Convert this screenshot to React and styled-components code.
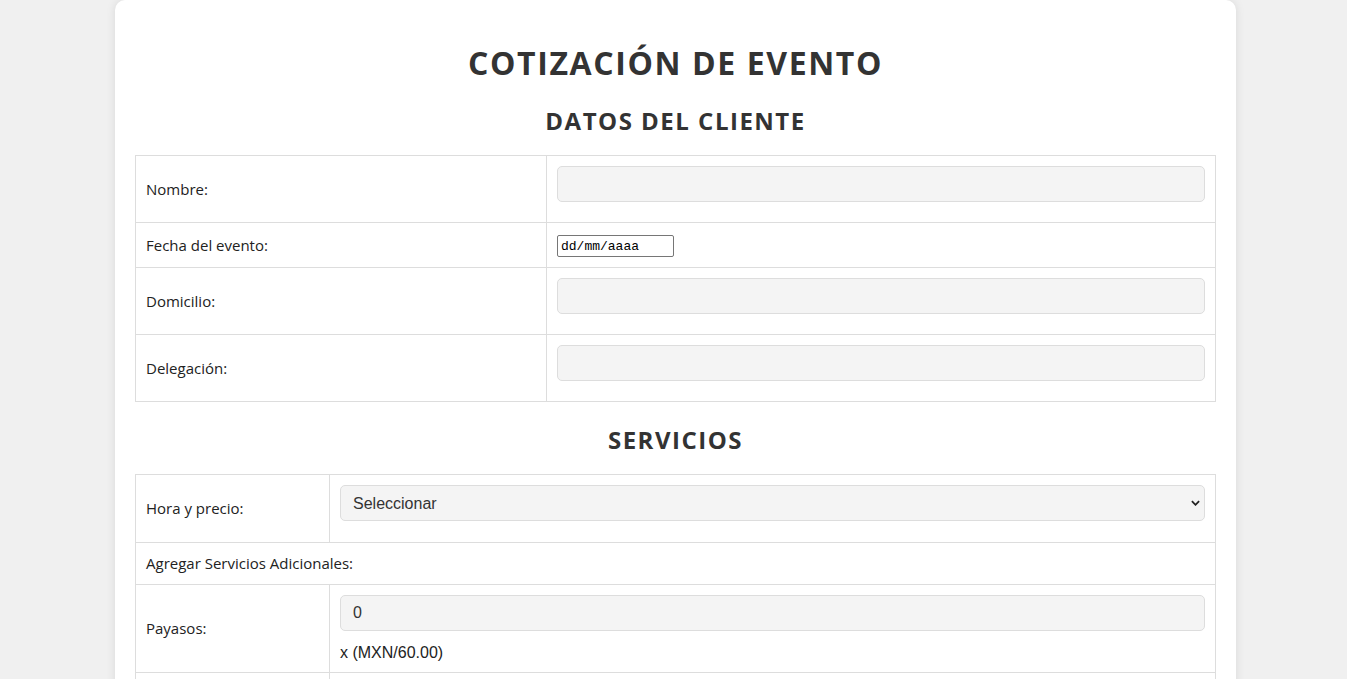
import styled, { createGlobalStyle } from "styled-components";

const GlobalStyle = createGlobalStyle`
  body {
    margin: 0;
    padding: 0 0 0 4px;
    background: #f0f0f0;
    font-family: "Open Sans", "Noto Sans", sans-serif;
    color: #222;
  }
`;

const clientFields = [
  { label: "Nombre:", type: "text" },
  { label: "Fecha del evento:", type: "date" },
  { label: "Domicilio:", type: "text" },
  { label: "Delegación:", type: "text" },
];

function App() {
  return (
    <>
      <GlobalStyle />
      <Container>
        <Title>COTIZACIÓN DE EVENTO</Title>

        <Subtitle>DATOS DEL CLIENTE</Subtitle>
        <Table>
          <tbody>
            {clientFields.map((field) => (
              <tr key={field.label}>
                <LabelCell $w="390px">{field.label}</LabelCell>
                <Cell>
                  {field.type === "date" ? (
                    <DateBox readOnly value="dd/mm/aaaa" />
                  ) : (
                    <Input type="text" />
                  )}
                </Cell>
              </tr>
            ))}
          </tbody>
        </Table>

        <Subtitle>SERVICIOS</Subtitle>
        <Table>
          <tbody>
            <tr>
              <LabelCell $w="173px">Hora y precio:</LabelCell>
              <Cell>
                <SelectWrap>
                  <Select defaultValue="">
                    <option value="">Seleccionar</option>
                    <option value="3">3 horas</option>
                    <option value="4">4 horas</option>
                  </Select>
                  <Chevron viewBox="0 0 10 6">
                    <path d="M1 1l4 4 4-4" />
                  </Chevron>
                </SelectWrap>
              </Cell>
            </tr>
            <tr>
              <LabelCell colSpan={2}>Agregar Servicios Adicionales:</LabelCell>
            </tr>
            <tr>
              <LabelCell $w="173px">Payasos:</LabelCell>
              <Cell>
                <Input type="text" defaultValue="0" />
                <Price>x (MXN/60.00)</Price>
              </Cell>
            </tr>
            <tr>
              <LabelCell $w="173px">Magos:</LabelCell>
              <Cell>
                <Input type="text" defaultValue="0" />
                <Price>x (MXN/80.00)</Price>
              </Cell>
            </tr>
          </tbody>
        </Table>
      </Container>
    </>
  );
}

export default App;

const Container = styled.div`
  width: 1081px;
  margin: 0 auto;
  padding: 20px;
  background: #fff;
  border-radius: 10px;
  box-shadow: 0 0 10px rgba(0, 0, 0, 0.1);
`;

const Title = styled.h1`
  margin: 21px 0 0;
  text-align: center;
  font-size: 32px;
  line-height: 44px;
  font-weight: 700;
  letter-spacing: 1.6px;
  color: #333;
`;

const Subtitle = styled.h2`
  margin: 20px 0 18px;
  text-align: center;
  font-size: 24px;
  line-height: 32px;
  font-weight: 700;
  letter-spacing: 1.5px;
  color: #333;
`;

const Table = styled.table`
  width: 100%;
  border-collapse: collapse;
  margin-bottom: 22px;
`;

const Cell = styled.td`
  border: 1px solid #ddd;
  padding: 10px;
  font-size: 15px;
  line-height: 21px;
  vertical-align: middle;
`;

const LabelCell = styled(Cell)`
  width: ${({ $w }) => $w || "auto"};
`;

const Input = styled.input`
  display: block;
  box-sizing: border-box;
  width: 100%;
  height: 36px;
  margin: 0 0 10px;
  padding: 8px 12px;
  border: 1px solid #ddd;
  border-radius: 5px;
  background: #f4f4f4;
  font-family: "Liberation Sans", Arial, sans-serif;
  font-size: 16px;
  color: #333;
  outline: none;
`;

const DateBox = styled.input`
  box-sizing: border-box;
  width: 117px;
  height: 22px;
  margin: 2px 0 0;
  padding: 1px 3px;
  border: 1px solid #767676;
  border-radius: 2px;
  background: #fff;
  font-family: "Liberation Mono", "DejaVu Sans Mono", monospace;
  font-size: 13px;
  color: #000;
  vertical-align: middle;
  outline: none;
`;

const SelectWrap = styled.div`
  position: relative;
  margin-bottom: 11px;
`;

const Select = styled.select`
  display: block;
  box-sizing: border-box;
  width: 100%;
  height: 36px;
  padding: 0 12px;
  border: 1px solid #ddd;
  border-radius: 5px;
  background: #f4f4f4;
  font-family: "Liberation Sans", Arial, sans-serif;
  font-size: 16px;
  color: #333;
  appearance: none;
  outline: none;
`;

const Chevron = styled.svg`
  position: absolute;
  right: 5px;
  top: 15px;
  width: 9px;
  height: 6px;
  fill: none;
  stroke: #222;
  stroke-width: 2;
  pointer-events: none;
`;

const Price = styled.div`
  padding-top: 2px;
  font-family: "Liberation Sans", Arial, sans-serif;
  font-size: 16px;
  line-height: 19px;
  color: #222;
`;
